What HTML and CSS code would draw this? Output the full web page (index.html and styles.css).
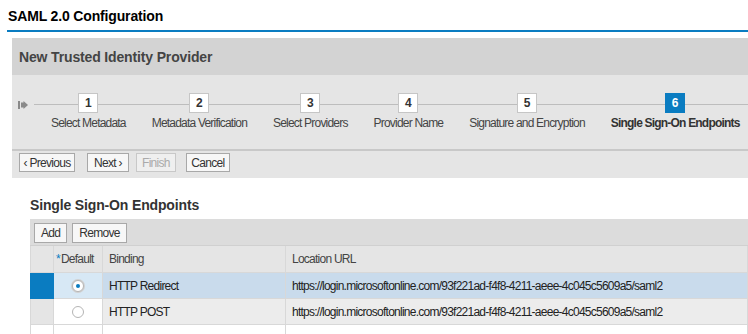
FILE: index.html
```html
<!DOCTYPE html>
<html lang="en">
<head>
    <meta charset="UTF-8">
    <meta name="viewport" content="width=device-width, initial-scale=1.0">
    <title>SAML 2.0 Configuration</title>
    <link rel="stylesheet" href="styles.css">
</head>
<body>
    <h1 class="page-title">SAML 2.0 Configuration</h1>

    <div class="wizard">
        <div class="wizard-head">New Trusted Identity Provider</div>

        <div class="steps">
            <span class="steps-start">
                <svg width="10" height="8" viewBox="0 0 10 8"><rect x="0" y="0" width="2" height="8" fill="#8a8a8a"/><path d="M3 1.5h2.5V0L10 4 5.5 8V6.5H3z" fill="#8a8a8a"/></svg>
            </span>
            <div class="step">
                <div class="step-num">1</div>
                <div class="step-label">Select Metadata</div>
            </div>
            <div class="step">
                <div class="step-num">2</div>
                <div class="step-label">Metadata Verification</div>
            </div>
            <div class="step">
                <div class="step-num">3</div>
                <div class="step-label">Select Providers</div>
            </div>
            <div class="step">
                <div class="step-num">4</div>
                <div class="step-label">Provider Name</div>
            </div>
            <div class="step">
                <div class="step-num">5</div>
                <div class="step-label">Signature and Encryption</div>
            </div>
            <div class="step current">
                <div class="step-num">6</div>
                <div class="step-label">Single Sign-On Endpoints</div>
            </div>
        </div>

        <div class="wizard-actions">
            <button class="btn btn-prev">&#x2039; Previous</button>
            <button class="btn btn-next">Next &#x203A;</button>
            <button class="btn" disabled>Finish</button>
            <button class="btn btn-cancel">Cancel</button>
        </div>
    </div>

    <div class="endpoints">
        <h2>Single Sign-On Endpoints</h2>
        <div class="toolbar">
            <button class="btn">Add</button>
            <button class="btn">Remove</button>
        </div>
        <table class="grid">
            <colgroup>
                <col class="col-sel">
                <col class="col-default">
                <col class="col-binding">
                <col>
            </colgroup>
            <thead>
                <tr>
                    <th class="sel"></th>
                    <th><span class="req">*</span>Default</th>
                    <th>Binding</th>
                    <th>Location URL</th>
                </tr>
            </thead>
            <tbody>
                <tr class="selected">
                    <td class="sel"></td>
                    <td class="radio-cell"><span class="radio checked"></span></td>
                    <td>HTTP Redirect</td>
                    <td>https://login.microsoftonline.com/93f221ad-f4f8-4211-aeee-4c045c5609a5/saml2</td>
                </tr>
                <tr>
                    <td class="sel"></td>
                    <td class="radio-cell"><span class="radio"></span></td>
                    <td>HTTP POST</td>
                    <td>https://login.microsoftonline.com/93f221ad-f4f8-4211-aeee-4c045c5609a5/saml2</td>
                </tr>
                <tr class="empty">
                    <td class="sel"></td>
                    <td></td>
                    <td></td>
                    <td></td>
                </tr>
            </tbody>
        </table>
    </div>
</body>
</html>
```

FILE: styles.css
```css
html,
body {
    height: 100%;
}
body {
    margin: 0;
    padding: 8px 0 0 7px;
    box-sizing: border-box;
    font-family: "Liberation Sans", Arial, sans-serif;
    color: #333;
    background-color: white;
    overflow: hidden;
}
.page-title {
    margin: 0;
    padding: 0 0 6px 1px;
    font-size: 14px;
    line-height: 16px;
    font-weight: bold;
    letter-spacing: -0.15px;
    color: #000;
    border-bottom: 2px solid #0a7cc1;
}
.wizard {
    margin: 6px 0 0 5px;
    background-color: #e5e5e5;
}
.wizard-head {
    height: 37px;
    line-height: 39px;
    padding-left: 7px;
    background-color: #d3d3d3;
    font-size: 14px;
    font-weight: bold;
    letter-spacing: -0.15px;
    color: #444;
}
.steps {
    position: relative;
    display: flex;
    gap: 26px;
    height: 76px;
    padding: 18px 0 0 39px;
    box-sizing: border-box;
    border-bottom: 2px solid #c8c8c8;
}
.steps::before {
    content: "";
    position: absolute;
    left: 22px;
    right: 0;
    top: 29px;
    height: 1px;
    background-color: #bdbdbd;
}
.steps-start {
    position: absolute;
    left: 6px;
    top: 26px;
    line-height: 0;
}
.step {
    position: relative;
    display: flex;
    flex-direction: column;
    align-items: center;
}
.step-num {
    width: 18px;
    height: 18px;
    line-height: 18px;
    text-align: center;
    background-color: white;
    border: 1px solid #c6c6c6;
    font-size: 12px;
    font-weight: bold;
    color: #333;
}
.step-label {
    margin-top: 3px;
    font-size: 12px;
    line-height: 14px;
    letter-spacing: -0.8px;
    white-space: nowrap;
    color: #444;
}
.current .step-num {
    background-color: #0a7cc1;
    border-color: #0a7cc1;
    color: white;
}
.current .step-label {
    font-weight: bold;
    color: #333;
}
.wizard-actions {
    display: flex;
    gap: 7px;
    padding: 2px 0 6px 7px;
}
.btn {
    height: 19px;
    padding: 0 5px;
    background-color: #f7f7f7;
    border: 1px solid #a8a8a8;
    border-radius: 0;
    font-family: "Liberation Sans", Arial, sans-serif;
    font-size: 12px;
    letter-spacing: -0.7px;
    white-space: nowrap;
    color: #333;
    cursor: pointer;
}
.btn:disabled {
    color: #aaa;
    border-color: #c8c8c8;
    background-color: #efefef;
}
.btn-prev {
    width: 56px;
    padding: 0;
}
.btn-next {
    width: 42px;
    padding: 0;
    margin-left: 5px;
}
.btn-cancel {
    width: 44px;
    padding: 0;
    margin-left: 3px;
}
.endpoints {
    margin: 19px 0 0 23px;
}
.endpoints h2 {
    margin: 0 0 6px 0;
    font-size: 14px;
    line-height: 16px;
    font-weight: bold;
    letter-spacing: -0.15px;
    color: #333;
}
.toolbar {
    display: flex;
    gap: 5px;
    height: 27px;
    padding: 4px 0 0 4px;
    box-sizing: border-box;
    background-color: #dcdcdc;
    border-bottom: 1px solid #d0d0d0;
}
.toolbar .btn {
    height: 20px;
    padding: 0 6px;
}
.grid {
    width: 100%;
    border-collapse: collapse;
    table-layout: fixed;
    font-size: 12px;
    letter-spacing: -0.75px;
}
.col-sel {
    width: 23px;
}
.col-default {
    width: 49px;
}
.col-binding {
    width: 183px;
}
.grid th,
.grid td {
    padding: 0 6px;
    text-align: left;
    white-space: nowrap;
    overflow: hidden;
    border: 1px solid #d8d8d8;
    border-top: none;
}
.grid th {
    height: 26px;
    font-weight: normal;
    color: #444;
    background-color: #e5e5e5;
}
.grid th:nth-child(2) {
    padding: 0 2px;
}
.req {
    color: #0a7cc1;
    margin-right: 1px;
}
.grid td {
    height: 25px;
    color: #222;
    background-color: #ececec;
}
.grid td.sel {
    background-color: #e5e5e5;
}
.grid td.radio-cell {
    text-align: center;
    background-color: white;
}
.grid tr.selected td {
    background-color: #c9dbec;
}
.grid tr.selected td.radio-cell {
    background-color: #d7e8f5;
}
.grid tr.selected td.sel {
    background-color: #0a7cc1;
    border-color: #0a7cc1;
}
.grid tr.empty td {
    background-color: white;
}
.radio {
    display: inline-block;
    width: 10px;
    height: 10px;
    border: 1px solid #b5b5b5;
    border-radius: 50%;
    background-color: white;
    vertical-align: middle;
    position: relative;
}
.radio.checked {
    box-shadow: 0 0 0 1px #d0d0d0;
}
.radio.checked::after {
    content: "";
    position: absolute;
    left: 3px;
    top: 3px;
    width: 4px;
    height: 4px;
    border-radius: 50%;
    background-color: #0a7cc1;
}
```
